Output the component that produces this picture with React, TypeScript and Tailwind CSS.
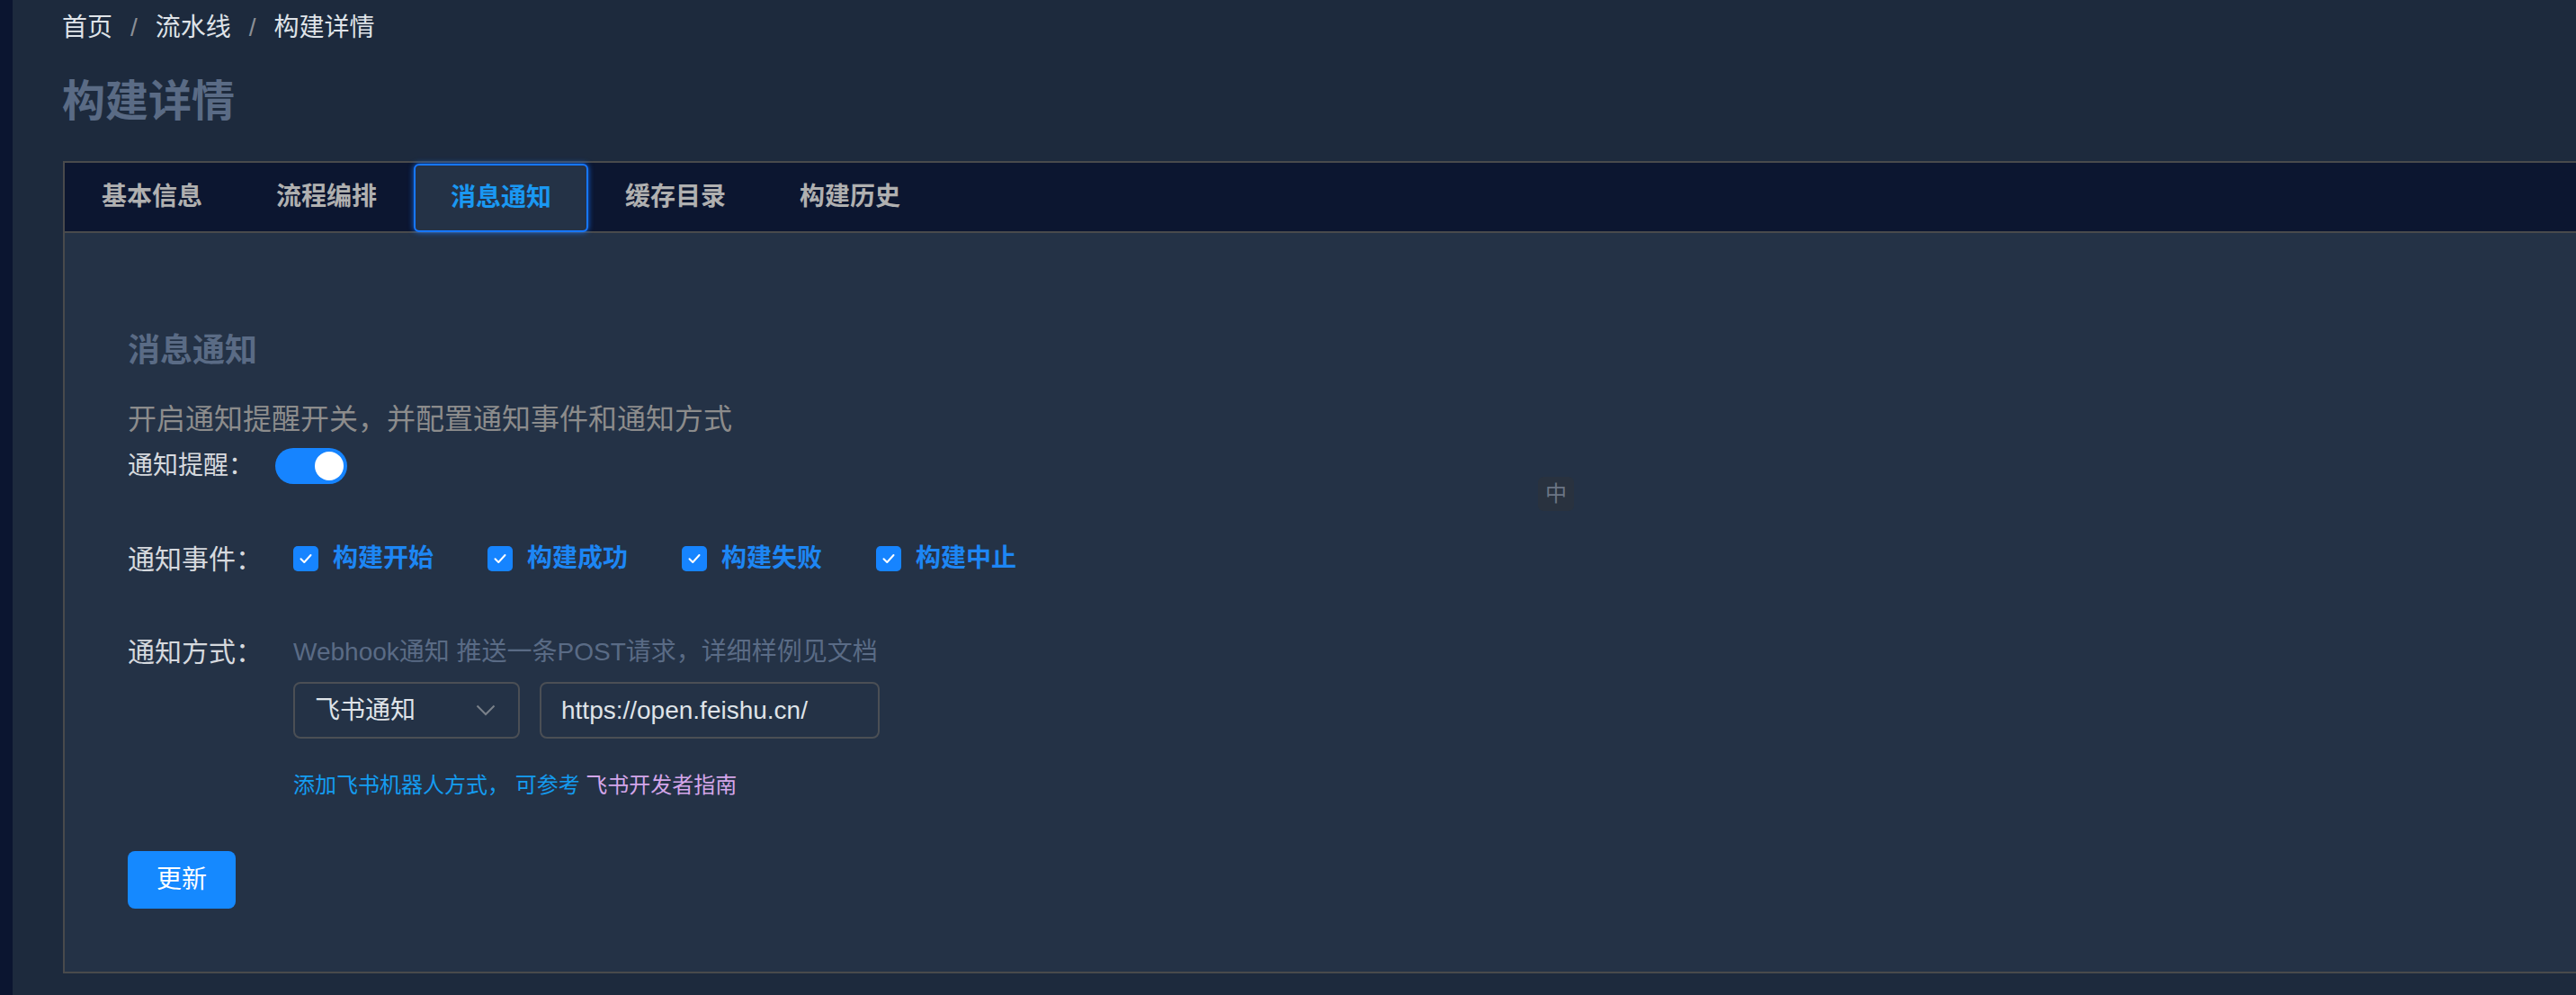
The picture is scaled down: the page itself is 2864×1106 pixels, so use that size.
import React from "react";

function Check() {
  return (
    <span className="flex h-[28px] w-[28px] shrink-0 items-center justify-center rounded-[5px] bg-[#1684ff]">
      <svg width="20" height="20" viewBox="0 0 16 16" fill="none">
        <path d="M3.6 8.2 L6.6 11.2 L12.4 4.8" stroke="white" strokeWidth="1.6" strokeLinecap="round" strokeLinejoin="round" />
      </svg>
    </span>
  );
}

const tabs = ["基本信息", "流程编排", "消息通知", "缓存目录", "构建历史"];
const events = ["构建开始", "构建成功", "构建失败", "构建中止"];

export default function App() {
  return (
    <div className="flex h-[1106px] w-full overflow-hidden bg-[#1d2a3d] font-['Liberation_Sans','Noto_Sans_CJK_SC',sans-serif]">
      <div className="w-[14px] shrink-0 bg-[#0b1530]" />
      <div className="flex min-w-0 flex-1 flex-col pl-[55px]">
        <nav className="mt-[11px] flex h-[40px] items-center text-[28px] leading-[40px] text-[#dfe3e8]">
          <span>首页</span>
          <span className="mx-[20px] text-[#8b8f96]">/</span>
          <span>流水线</span>
          <span className="mx-[20px] text-[#8b8f96]">/</span>
          <span>构建详情</span>
        </nav>
        <h1 className="mt-[30px] h-[64px] text-[48px] font-bold leading-[64px] text-[#5a6b85]">构建详情</h1>
        <div className="ml-px mt-[34px] w-[2820px] shrink-0 border-2 border-r-0 border-[#494a4c]">
          <div className="flex h-[78px] border-b-2 border-[#494a4c] bg-[#0c1630]">
            {tabs.map((t) =>
              t === "消息通知" ? (
                <div
                  key={t}
                  className="relative z-10 mt-px flex h-[76px] w-[194px] items-center justify-center rounded-[6px] border-2 border-[#1677ff] bg-[#243246] text-[28px] font-semibold text-[#1a98f2] shadow-[0_0_6px_rgba(22,119,255,0.85)]"
                >
                  {t}
                </div>
              ) : (
                <div key={t} className="flex w-[194px] items-center justify-center text-[28px] font-semibold text-[#b0b0b0]">
                  {t}
                </div>
              )
            )}
          </div>
          <div className="relative bg-[#243246] pb-[70px] pl-[70px] pt-[107px]">
            <h2 className="text-[36px] font-bold leading-[48px] text-[#5a6b85]">消息通知</h2>
            <p className="mt-[30px] text-[32px] leading-[44px] text-[#8c8c8c]">开启通知提醒开关，并配置通知事件和通知方式</p>
            <div className="mt-[10px] flex h-[40px] items-center">
              <span className="w-[164px] text-[28px] text-[#d6d9de]">通知提醒：</span>
              <span className="flex h-[40px] w-[80px] items-center justify-end rounded-full bg-[#1684ff] pr-[4px]">
                <span className="h-[32px] w-[32px] rounded-full bg-white" />
              </span>
            </div>
            <div className="mt-[63px] flex h-[40px] items-center">
              <span className="w-[184px] text-[30px] text-[#d6d9de]">通知事件：</span>
              <div className="flex items-center gap-[60px]">
                {events.map((e) => (
                  <label key={e} className="flex items-center gap-[16px]">
                    <Check />
                    <span className="text-[28px] font-semibold text-[#1d86f4]">{e}</span>
                  </label>
                ))}
              </div>
            </div>
            <div className="mt-[64px] flex">
              <span className="w-[184px] text-[30px] leading-[40px] text-[#d6d9de]">通知方式：</span>
              <div className="flex flex-col">
                <span className="text-[28px] leading-[40px] text-[#5a6b85]">Webhook通知 推送一条POST请求，详细样例见文档</span>
                <div className="mt-[13px] flex gap-[22px]">
                  <div className="flex h-[63px] w-[252px] items-center justify-between rounded-[8px] border-2 border-[#4b4f55] pl-[22px] pr-[25px] text-[28px] text-[#dfe3e8]">
                    <span>飞书通知</span>
                    <svg width="22" height="13" viewBox="0 0 22 13" fill="none">
                      <path d="M1.5 1.5 L11 11 L20.5 1.5" stroke="#7a8089" strokeWidth="2" />
                    </svg>
                  </div>
                  <div className="flex h-[63px] w-[378px] items-center rounded-[8px] border-2 border-[#4b4f55] pl-[22px] text-[28px] text-[#dfe3e8]">
                    https://open.feishu.cn/
                  </div>
                </div>
                <p className="mt-[36px] text-[24px] leading-[32px]">
                  <span className="text-[#149cf0]">添加飞书机器人方式， 可参考 </span>
                  <span className="text-[#d4a6ea]">飞书开发者指南</span>
                </p>
              </div>
            </div>
            <button className="mt-[57px] flex h-[64px] w-[120px] items-center justify-center rounded-[8px] bg-[#1589ff] text-[28px] text-white">
              更新
            </button>
            <div className="absolute left-[1638px] top-[271px] flex h-[38px] w-[40px] items-center justify-center rounded-[6px] bg-[#29323f] text-[24px] text-[#6b7584]">
              中
            </div>
          </div>
        </div>
      </div>
    </div>
  );
}
